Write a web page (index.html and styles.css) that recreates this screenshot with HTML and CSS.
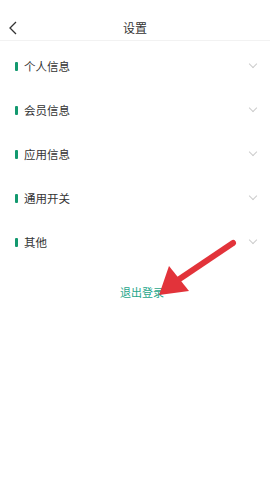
FILE: index.html
```html
<!DOCTYPE html>
<html lang="zh-CN">
<head>
    <meta charset="UTF-8">
    <meta name="viewport" content="width=device-width, initial-scale=1.0">
    <title>设置</title>
    <link rel="stylesheet" href="styles.css">
</head>
<body>
    <div class="page">
        <div class="header">
            <svg class="back" width="10" height="14" viewBox="0 0 10 14">
                <path d="M8 1 L2 7 L8 13" fill="none" stroke="#333" stroke-width="1.3"/>
            </svg>
            <div class="title">设置</div>
        </div>
        <div class="list">
            <div class="row"><span class="mark"></span><span class="label">个人信息</span><span class="chev"></span></div>
            <div class="row"><span class="mark"></span><span class="label">会员信息</span><span class="chev"></span></div>
            <div class="row"><span class="mark"></span><span class="label">应用信息</span><span class="chev"></span></div>
            <div class="row"><span class="mark"></span><span class="label">通用开关</span><span class="chev"></span></div>
            <div class="row"><span class="mark"></span><span class="label">其他</span><span class="chev"></span></div>
        </div>
        <div class="logout">退出登录</div>
        <svg class="arrow" width="270" height="480" viewBox="0 0 270 480">
            <line x1="233" y1="243" x2="178" y2="280" stroke="#e2333a" stroke-width="6" stroke-linecap="round"/>
            <polygon points="159,295 169,266 189,291" fill="#e2333a"/>
        </svg>
    </div>
</body>
</html>
```

FILE: styles.css
```css
body {
    margin: 0;
    background-color: #fff;
    font-family: "Noto Sans CJK SC", "Noto Sans", sans-serif;
}

.page {
    position: relative;
    width: 270px;
    height: 480px;
    overflow: hidden;
}

.header {
    height: 41px;
    border-bottom: 1px solid #f2f2f2;
    display: flex;
    align-items: center;
    justify-content: center;
    position: relative;
    padding-top: 15px;
    box-sizing: border-box;
}

.back {
    position: absolute;
    left: 8px;
    top: 21px;
}

.title {
    font-size: 12px;
    color: #333;
}

.list {
    padding-top: 3px;
}

.row {
    height: 44px;
    display: flex;
    align-items: center;
    padding: 0 14px 0 15px;
}

.mark {
    width: 3px;
    height: 9px;
    background-color: #13996f;
    border-radius: 1px;
    margin-right: 6px;
}

.label {
    flex: 1;
    font-size: 11.5px;
    color: #333;
}

.chev {
    width: 5px;
    height: 5px;
    border-right: 1px solid #ccc;
    border-bottom: 1px solid #ccc;
    transform: rotate(45deg);
    margin-top: -4px;
}

.logout {
    margin-top: 20px;
    text-align: center;
    padding-left: 14px;
    font-size: 11px;
    color: #1ea68a;
}

.arrow {
    position: absolute;
    left: 0;
    top: 0;
}
```
